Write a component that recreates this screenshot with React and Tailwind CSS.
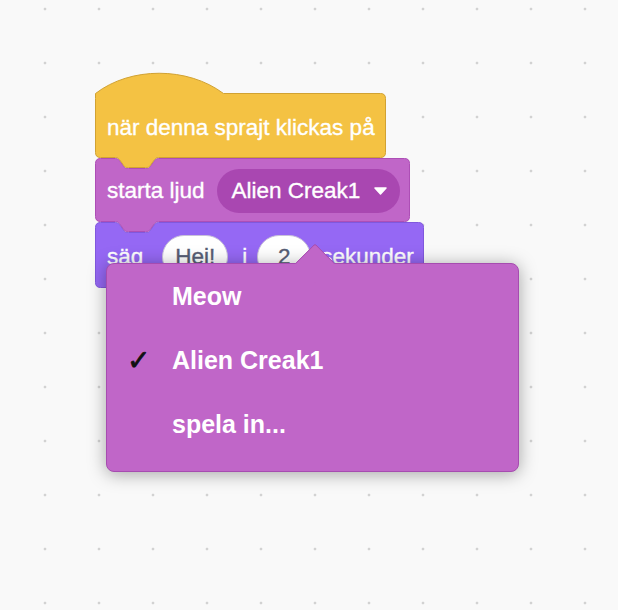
import React from 'react';

// Scratch-like block outline: rounded rect, notch on top, tab below
const blockPath = (w, h, { hat = false } = {}) => {
    const r = 5, nx = 20, d = 10;
    let p = '';
    if (hat) {
        p += `M0,${r} L0,0 C35,-27 92,-27 128,0 L${w - r},0`;
    } else {
        p += `M0,${r} Q0,0 ${r},0 L${nx},0`;
        p += ` C${nx + 2},0 ${nx + 3},1 ${nx + 4},2 L${nx + 9},${d - 1} C${nx + 10},${d} ${nx + 11},${d} ${nx + 13},${d}`;
        p += ` L${nx + 30},${d} C${nx + 32},${d} ${nx + 33},${d} ${nx + 34},${d - 1} L${nx + 39},2 C${nx + 40},1 ${nx + 41},0 ${nx + 43},0`;
        p += ` L${w - r},0`;
    }
    p += ` Q${w},0 ${w},${r} L${w},${h - r} Q${w},${h} ${w - r},${h} L${nx + 43},${h}`;
    p += ` C${nx + 41},${h} ${nx + 40},${h + 1} ${nx + 39},${h + 2} L${nx + 34},${h + d - 1} C${nx + 33},${h + d} ${nx + 32},${h + d} ${nx + 30},${h + d}`;
    p += ` L${nx + 13},${h + d} C${nx + 11},${h + d} ${nx + 10},${h + d} ${nx + 9},${h + d - 1} L${nx + 4},${h + 2} C${nx + 3},${h + 1} ${nx + 2},${h} ${nx},${h}`;
    p += ` L${r},${h} Q0,${h} 0,${h - r} Z`;
    return p;
};

const BlockShape = ({ w, h, hat, fill, stroke }) => (
    <svg className="absolute left-0 top-0 overflow-visible" width={w} height={h}>
        <g transform="translate(0.5 0.5)">
            <path d={blockPath(w - 1, h - 1, { hat })} fill={fill} stroke={stroke} strokeWidth="1" />
        </g>
    </svg>
);

const Oval = ({ children, className }) => (
    <div className={`h-[44px] rounded-full bg-white border border-[#c9c2d9] flex items-center justify-center text-[#575E75] ${className}`}>
        {children}
    </div>
);

export default function App() {
    return (
        <div className="relative w-[618px] h-[610px] overflow-hidden bg-[#f9f9f9] bg-[radial-gradient(circle,#d2d2d2_1.1px,transparent_1.7px)] [background-size:54px_54px] [background-position:18px_-18px] font-['Liberation_Sans',Arial,sans-serif] text-white">
            {/* Script stack */}
            <div className="absolute left-[95px] top-[93px] flex flex-col items-start text-[22.5px] [-webkit-text-stroke:0.35px_currentColor]">
                <div className="relative z-30 w-[291px] h-[65px] flex items-center pl-[12px] pt-[5px]">
                    <BlockShape w={291} h={65} hat fill="#F4C243" stroke="#D1A233" />
                    <span className="relative">när denna sprajt klickas på</span>
                </div>

                <div className="relative z-20 w-[315px] h-[64px] flex items-center pl-[12px] pt-[2px]">
                    <BlockShape w={315} h={64} fill="#C066C8" stroke="#AD4EB6" />
                    <span className="relative">starta ljud</span>
                    <div className="relative ml-[12px] w-[183px] h-[44px] rounded-full bg-[#A947B1] flex items-center pl-[15px]">
                        <span>Alien Creak1</span>
                        <svg className="ml-[14px]" width="13" height="8" viewBox="0 0 13 8">
                            <path d="M1 1 L12 1 L6.5 7 Z" fill="#fff" stroke="#fff" strokeWidth="1.5" strokeLinejoin="round" />
                        </svg>
                    </div>
                </div>

                <div className="relative z-10 w-[329px] h-[66px] flex items-center pl-[12px] pt-[4px]">
                    <BlockShape w={329} h={66} fill="#9568F4" stroke="#8058DD" />
                    <span className="relative">säg</span>
                    <Oval className="relative ml-[19px] w-[66px]">Hei!</Oval>
                    <span className="relative ml-[14px]">i</span>
                    <Oval className="relative ml-[10px] w-[54px]">2</Oval>
                    <span className="relative ml-[10px]">sekunder</span>
                </div>
            </div>

            {/* Dropdown menu */}
            <div className="absolute left-[106px] top-[263px] z-40 w-[413px] h-[209px] rounded-lg border border-[#A64CB0] bg-[#C066C8] shadow-[0_2px_18px_rgba(0,0,0,0.35)]">
                <div className="absolute left-[194px] -top-[15px] w-[28px] h-[28px] rotate-45 rounded-tl-[3px] border-t border-l border-[#A64CB0] bg-[#C066C8]"></div>
                <div className="relative flex flex-col pt-[1px] text-[25px] font-bold">
                    <div className="relative h-[64px] flex items-center pl-[65px]">Meow</div>
                    <div className="relative h-[64px] flex items-center pl-[65px]">
                        <span className="absolute left-[20px] text-[#111] text-[28px] font-normal italic font-['DejaVu_Sans',sans-serif] [-webkit-text-stroke:0.8px_#111]">✓</span>
                        Alien Creak1
                    </div>
                    <div className="relative h-[64px] flex items-center pl-[65px]">spela in...</div>
                </div>
            </div>
        </div>
    );
}
